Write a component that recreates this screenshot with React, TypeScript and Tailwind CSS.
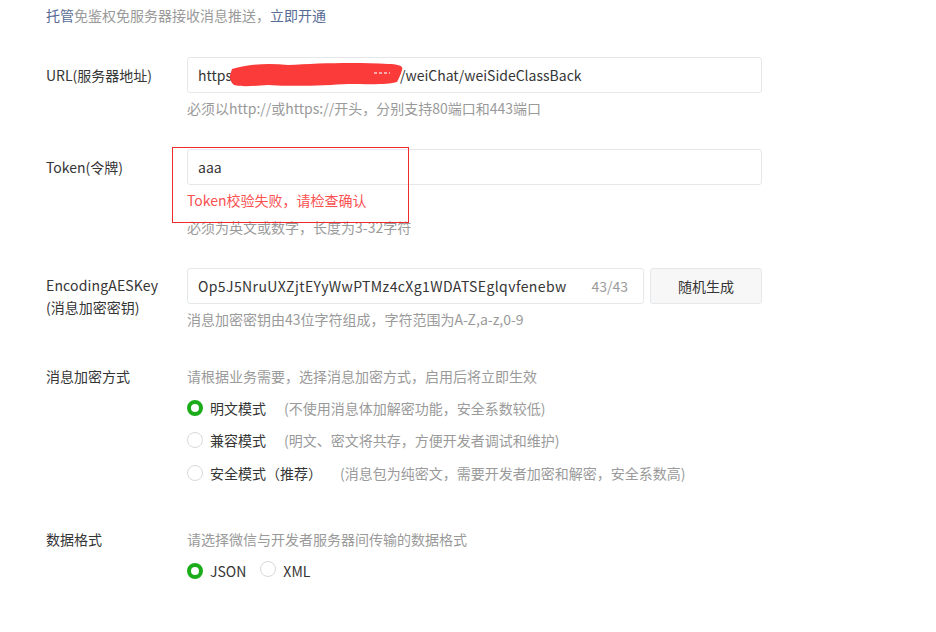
import React from "react";

const font = { fontFamily: '"Noto Sans CJK SC", "Noto Sans", sans-serif' };

function Radio({ checked }: { checked?: boolean }) {
  return checked ? (
    <span className="box-border inline-block h-4 w-4 shrink-0 rounded-full border-[4px] border-[#1aad19] bg-white" />
  ) : (
    <span className="box-border inline-block h-4 w-4 shrink-0 rounded-full border border-[#d9d9d9] bg-white" />
  );
}

function Scribble() {
  return (
    <svg
      className="pointer-events-none absolute left-[40px] top-[2px]"
      width="180"
      height="30"
      viewBox="0 0 180 30"
    >
      <path
        d="M4 9 C20 4 40 3 60 5 C90 3 130 2 160 4 C170 4 176 6 174 10 C173 14 171 18 169 22 C160 25 140 24 120 24 C100 25 70 27 40 25 C25 26 14 27 6 25 C2 22 1 16 3 12 Z"
        fill="#fb3a3a"
      />
      <path d="M146 13 L162 13" stroke="#f6d0d0" strokeWidth="1.5" strokeDasharray="3 2" />
    </svg>
  );
}

export default function App() {
  return (
    <div className="min-h-[632px] w-[936px] bg-white text-[14px] text-[#353535]" style={font}>
      <div className="pl-[46px] pt-[5px]">
        <div className="h-5 leading-5 text-[#9a9a9a]">
          <span className="text-[#576b95]">托管</span>免鉴权免服务器接收消息推送，
          <span className="text-[#576b95]">立即开通</span>
        </div>

        {/* URL */}
        <div className="mt-8 flex">
          <div className="w-[141px] shrink-0 leading-9">URL(服务器地址)</div>
          <div className="w-[575px]">
            <div className="relative box-border flex h-9 items-center rounded-[3px] border border-[#e4e8eb] px-[10px] whitespace-nowrap">
              <span>https</span>
              <span className="inline-block w-[168px]" />
              <span>/weiChat/weiSideClassBack</span>
              <Scribble />
            </div>
            <div className="mt-[5px] leading-5 text-[#9a9a9a]">必须以http://或https://开头，分别支持80端口和443端口</div>
          </div>
        </div>

        {/* Token */}
        <div className="mt-[31px] flex">
          <div className="w-[141px] shrink-0 leading-9">Token(令牌)</div>
          <div className="relative w-[575px]">
            <div className="box-border flex h-9 items-center rounded-[3px] border border-[#e4e8eb] px-[10px]">aaa</div>
            <div className="mt-[5px] leading-5 text-[#fa5151]">Token校验失败，请检查确认</div>
            <div className="mt-[7px] leading-5 text-[#9a9a9a]">必须为英文或数字，长度为3-32字符</div>
            <div className="pointer-events-none absolute left-[-15px] top-[-2px] h-[76px] w-[237px] border border-[#ee2a2a]" />
          </div>
        </div>

        {/* AES */}
        <div className="mt-[31px] flex">
          <div className="w-[141px] shrink-0 pt-[6px] leading-[22px]">
            <div className="tracking-[0.15px]">EncodingAESKey</div>
            <div>(消息加密密钥)</div>
          </div>
          <div className="w-[575px]">
            <div className="flex gap-[6px]">
              <div className="box-border flex h-9 w-[457px] items-center justify-between rounded-[3px] border border-[#e4e8eb] pl-[10px] pr-[15px]">
                <span className="tracking-[0.4px]">Op5J5NruUXZjtEYyWwPTMz4cXg1WDATSEglqvfenebw</span>
                <span className="text-[#9a9a9a]">43/43</span>
              </div>
              <div className="box-border flex h-9 w-[112px] items-center justify-center rounded-[3px] border border-[#e4e8eb] bg-[#f7f7f7]">随机生成</div>
            </div>
            <div className="mt-[5px] leading-5 text-[#9a9a9a]">消息加密密钥由43位字符组成，字符范围为A-Z,a-z,0-9</div>
          </div>
        </div>

        {/* Encrypt mode */}
        <div className="mt-[37px] flex">
          <div className="w-[141px] shrink-0 leading-5">消息加密方式</div>
          <div>
            <div className="leading-5 text-[#9a9a9a]">请根据业务需要，选择消息加密方式，启用后将立即生效</div>
            <div className="mt-3 flex items-center leading-5">
              <Radio checked />
              <span className="ml-[7px]">明文模式</span>
              <span className="ml-[18px] text-[#9a9a9a]">(不使用消息体加解密功能，安全系数较低)</span>
            </div>
            <div className="mt-3 flex items-center leading-5">
              <Radio />
              <span className="ml-[7px]">兼容模式</span>
              <span className="ml-[18px] text-[#9a9a9a]">(明文、密文将共存，方便开发者调试和维护)</span>
            </div>
            <div className="mt-[13px] flex items-center leading-5">
              <Radio />
              <span className="ml-[7px]">安全模式（推荐）</span>
              <span className="ml-[18px] text-[#9a9a9a]">(消息包为纯密文，需要开发者加密和解密，安全系数高)</span>
            </div>
          </div>
        </div>

        {/* Data format */}
        <div className="mt-[46px] flex">
          <div className="w-[141px] shrink-0 leading-5">数据格式</div>
          <div>
            <div className="leading-5 text-[#9a9a9a]">请选择微信与开发者服务器间传输的数据格式</div>
            <div className="mt-3 flex items-center leading-5">
              <Radio checked />
              <span className="ml-[7px]">JSON</span>
              <span className="ml-[14px]"><Radio /></span>
              <span className="ml-[7px]">XML</span>
            </div>
          </div>
        </div>
      </div>
    </div>
  );
}
